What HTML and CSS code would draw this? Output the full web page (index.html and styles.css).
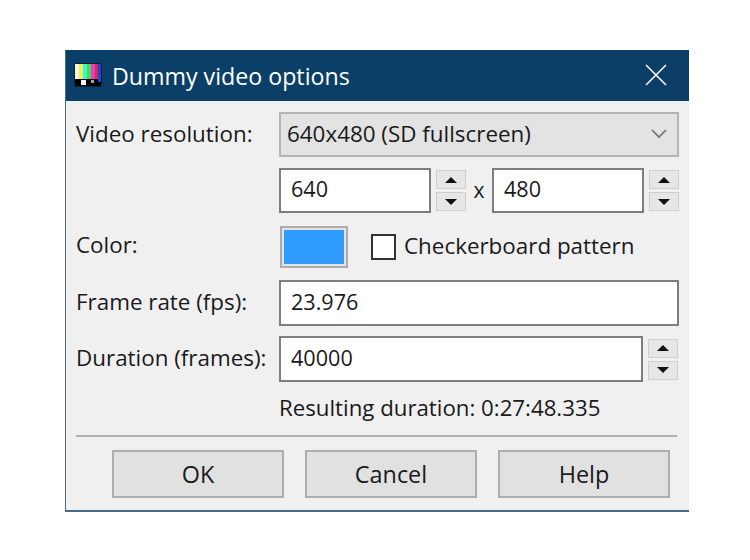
FILE: index.html
```html
<!DOCTYPE html>
<html lang="en">
<head>
<meta charset="utf-8">
<title>Dummy video options</title>
<link rel="stylesheet" href="styles.css">
</head>
<body>
<main class="window">
  <header class="titlebar">
    <svg class="app-icon" width="28" height="24" viewBox="0 0 28 24" aria-hidden="true">
      <rect x="0" y="0" width="28" height="24" rx="2" fill="#0b2238"/>
      <rect x="1" y="1" width="4" height="15" fill="#f2f2f2"/>
      <rect x="5" y="1" width="4" height="15" fill="#f4f13c"/>
      <rect x="9" y="1" width="4" height="15" fill="#3cf0e8"/>
      <rect x="13" y="1" width="4" height="15" fill="#35e83c"/>
      <rect x="17" y="1" width="4" height="15" fill="#e83cd8"/>
      <rect x="21" y="1" width="3" height="15" fill="#e0283c"/>
      <rect x="24" y="1" width="3" height="15" fill="#2a3ce0"/>
      <rect x="1" y="16" width="26" height="7" fill="#000"/>
      <rect x="7" y="17" width="5" height="5" fill="#f4f4f4"/>
      <rect x="17" y="17" width="3" height="3" fill="#9ab"/>
      <rect x="24" y="16" width="3" height="3" fill="#2a3ce0"/>
    </svg>
    <h1 class="title">Dummy video options</h1>
    <svg class="close" width="22" height="22" viewBox="0 0 22 22" aria-hidden="true">
      <path d="M1 1 L21 21 M21 1 L1 21" stroke="#fff" stroke-width="1.6" fill="none"/>
    </svg>
  </header>

  <div class="content">
    <div class="form">
      <label class="label">Video resolution:</label>
      <div class="combo">
        <span>640x480 (SD fullscreen)</span>
        <svg width="16" height="10" viewBox="0 0 16 10" aria-hidden="true"><path d="M1 1 L8 8 L15 1" stroke="#707070" stroke-width="1.6" fill="none"/></svg>
      </div>

      <span class="label"></span>
      <div class="dims">
        <div class="field short">640</div>
        <div class="spin">
          <button class="spin-btn" type="button"><span class="up"></span></button>
          <button class="spin-btn" type="button"><span class="down"></span></button>
        </div>
        <span class="times">x</span>
        <div class="field short">480</div>
        <div class="spin">
          <button class="spin-btn" type="button"><span class="up"></span></button>
          <button class="spin-btn" type="button"><span class="down"></span></button>
        </div>
      </div>

      <label class="label label-color">Color:</label>
      <div class="color-row">
        <div class="swatch"><div class="swatch-fill"></div></div>
        <span class="checkbox"></span>
        <span class="check-label">Checkerboard pattern</span>
      </div>

      <label class="label">Frame rate (fps):</label>
      <div class="field wide">23.976</div>

      <label class="label">Duration (frames):</label>
      <div class="dims">
        <div class="field long">40000</div>
        <div class="spin">
          <button class="spin-btn" type="button"><span class="up"></span></button>
          <button class="spin-btn" type="button"><span class="down"></span></button>
        </div>
      </div>

      <span class="label"></span>
      <div class="result">Resulting duration: 0:27:48.335</div>
    </div>

    <hr class="rule">

    <div class="buttons">
      <button class="btn" type="button">OK</button>
      <button class="btn" type="button">Cancel</button>
      <button class="btn" type="button">Help</button>
    </div>
  </div>
</main>
</body>
</html>
```
FILE: styles.css
```css
* { box-sizing: border-box; }
html, body { margin: 0; background: #fff; }
body {
  padding: 50px 0 0 65px;
  height: 560px;
  overflow: hidden;
  font-family: "Open Sans", "Noto Sans", sans-serif;
  font-size: 22.4px;
  line-height: 30px;
  color: #1a1a1a;
}
.window {
  width: 624px;
  height: 462px;
  background: #f0f0f0;
  border-left: 1px solid #4a6a85;
  border-bottom: 2px solid #4a6a85;
  display: flex;
  flex-direction: column;
}
.titlebar {
  height: 51px;
  background: #0b3f68;
  display: flex;
  align-items: center;
  padding: 0 22px 0 8px;
  color: #fff;
  flex: none;
}
.app-icon { flex: none; margin-top: -2px; }
.title {
  margin: 0 0 0 10px;
  font-size: 23.2px;
  font-weight: 400;
  flex: 1;
}
.close { flex: none; margin-top: -2px; }
.content {
  flex: 1;
  padding: 11px 11px 0 10px;
  display: flex;
  flex-direction: column;
}
.form {
  display: grid;
  grid-template-columns: 203px 400px;
  grid-template-rows: 56px 58px 54px 56px 56px 30px;
  align-items: start;
}
.label { margin-top: 7px; white-space: nowrap; }
.label-color { margin-top: 4px; }
.combo {
  height: 45px;
  background: #e3e3e3;
  border: 2px solid #b4b4b4;
  display: flex;
  align-items: center;
  justify-content: space-between;
  padding: 0 10px 2px 6px;
}
.dims { display: flex; align-items: center; }
.field {
  background: #fff;
  border: 2px solid #7e7e7e;
  height: 45px;
  display: flex;
  align-items: center;
  padding: 0 0 3px 10px;
  font-size: 21.6px;
}
.short { width: 152px; }
.long { width: 364px; height: 46px; }
.wide { width: 400px; height: 46px; }
.spin {
  width: 30px;
  margin-left: 5px;
  display: flex;
  flex-direction: column;
  gap: 3px;
}
.spin-btn {
  width: 30px;
  height: 19px;
  padding: 0;
  background: #e6e6e6;
  border: 1.5px solid #cfcfcf;
  display: flex;
  align-items: center;
  justify-content: center;
}
.up, .down {
  width: 0;
  height: 0;
  border-left: 6px solid transparent;
  border-right: 6px solid transparent;
}
.up { border-bottom: 6px solid #111; }
.down { border-top: 6px solid #111; }
.times { width: 26px; text-align: center; margin-top: -2px; font-size: 21px; }
.color-row { display: flex; align-items: center; height: 42px; }
.swatch {
  width: 68px;
  height: 42px;
  margin-left: 1px;
  background: #e4e4e4;
  border: 2px solid #acacac;
  padding: 2px;
  flex: none;
}
.swatch-fill { width: 100%; height: 100%; background: #2f9bff; }
.checkbox {
  width: 25px;
  height: 26px;
  margin-left: 23px;
  background: #fff;
  border: 2px solid #333;
  flex: none;
}
.check-label { margin-left: 8px; margin-top: -3px; white-space: nowrap; }
.result { white-space: nowrap; margin-top: 1px; font-size: 22.25px; }
.rule {
  width: 601px;
  height: 2px;
  margin: 13px 0 0 0;
  border: 0;
  background: #b0b0b0;
}
.buttons {
  display: flex;
  gap: 21px;
  padding-left: 36px;
  margin-top: 13px;
}
.btn {
  width: 172px;
  height: 48px;
  background: #e1e1e1;
  border: 2px solid #adadad;
  font: inherit;
  font-size: 23.4px;
  color: inherit;
  padding: 0;
}
```
